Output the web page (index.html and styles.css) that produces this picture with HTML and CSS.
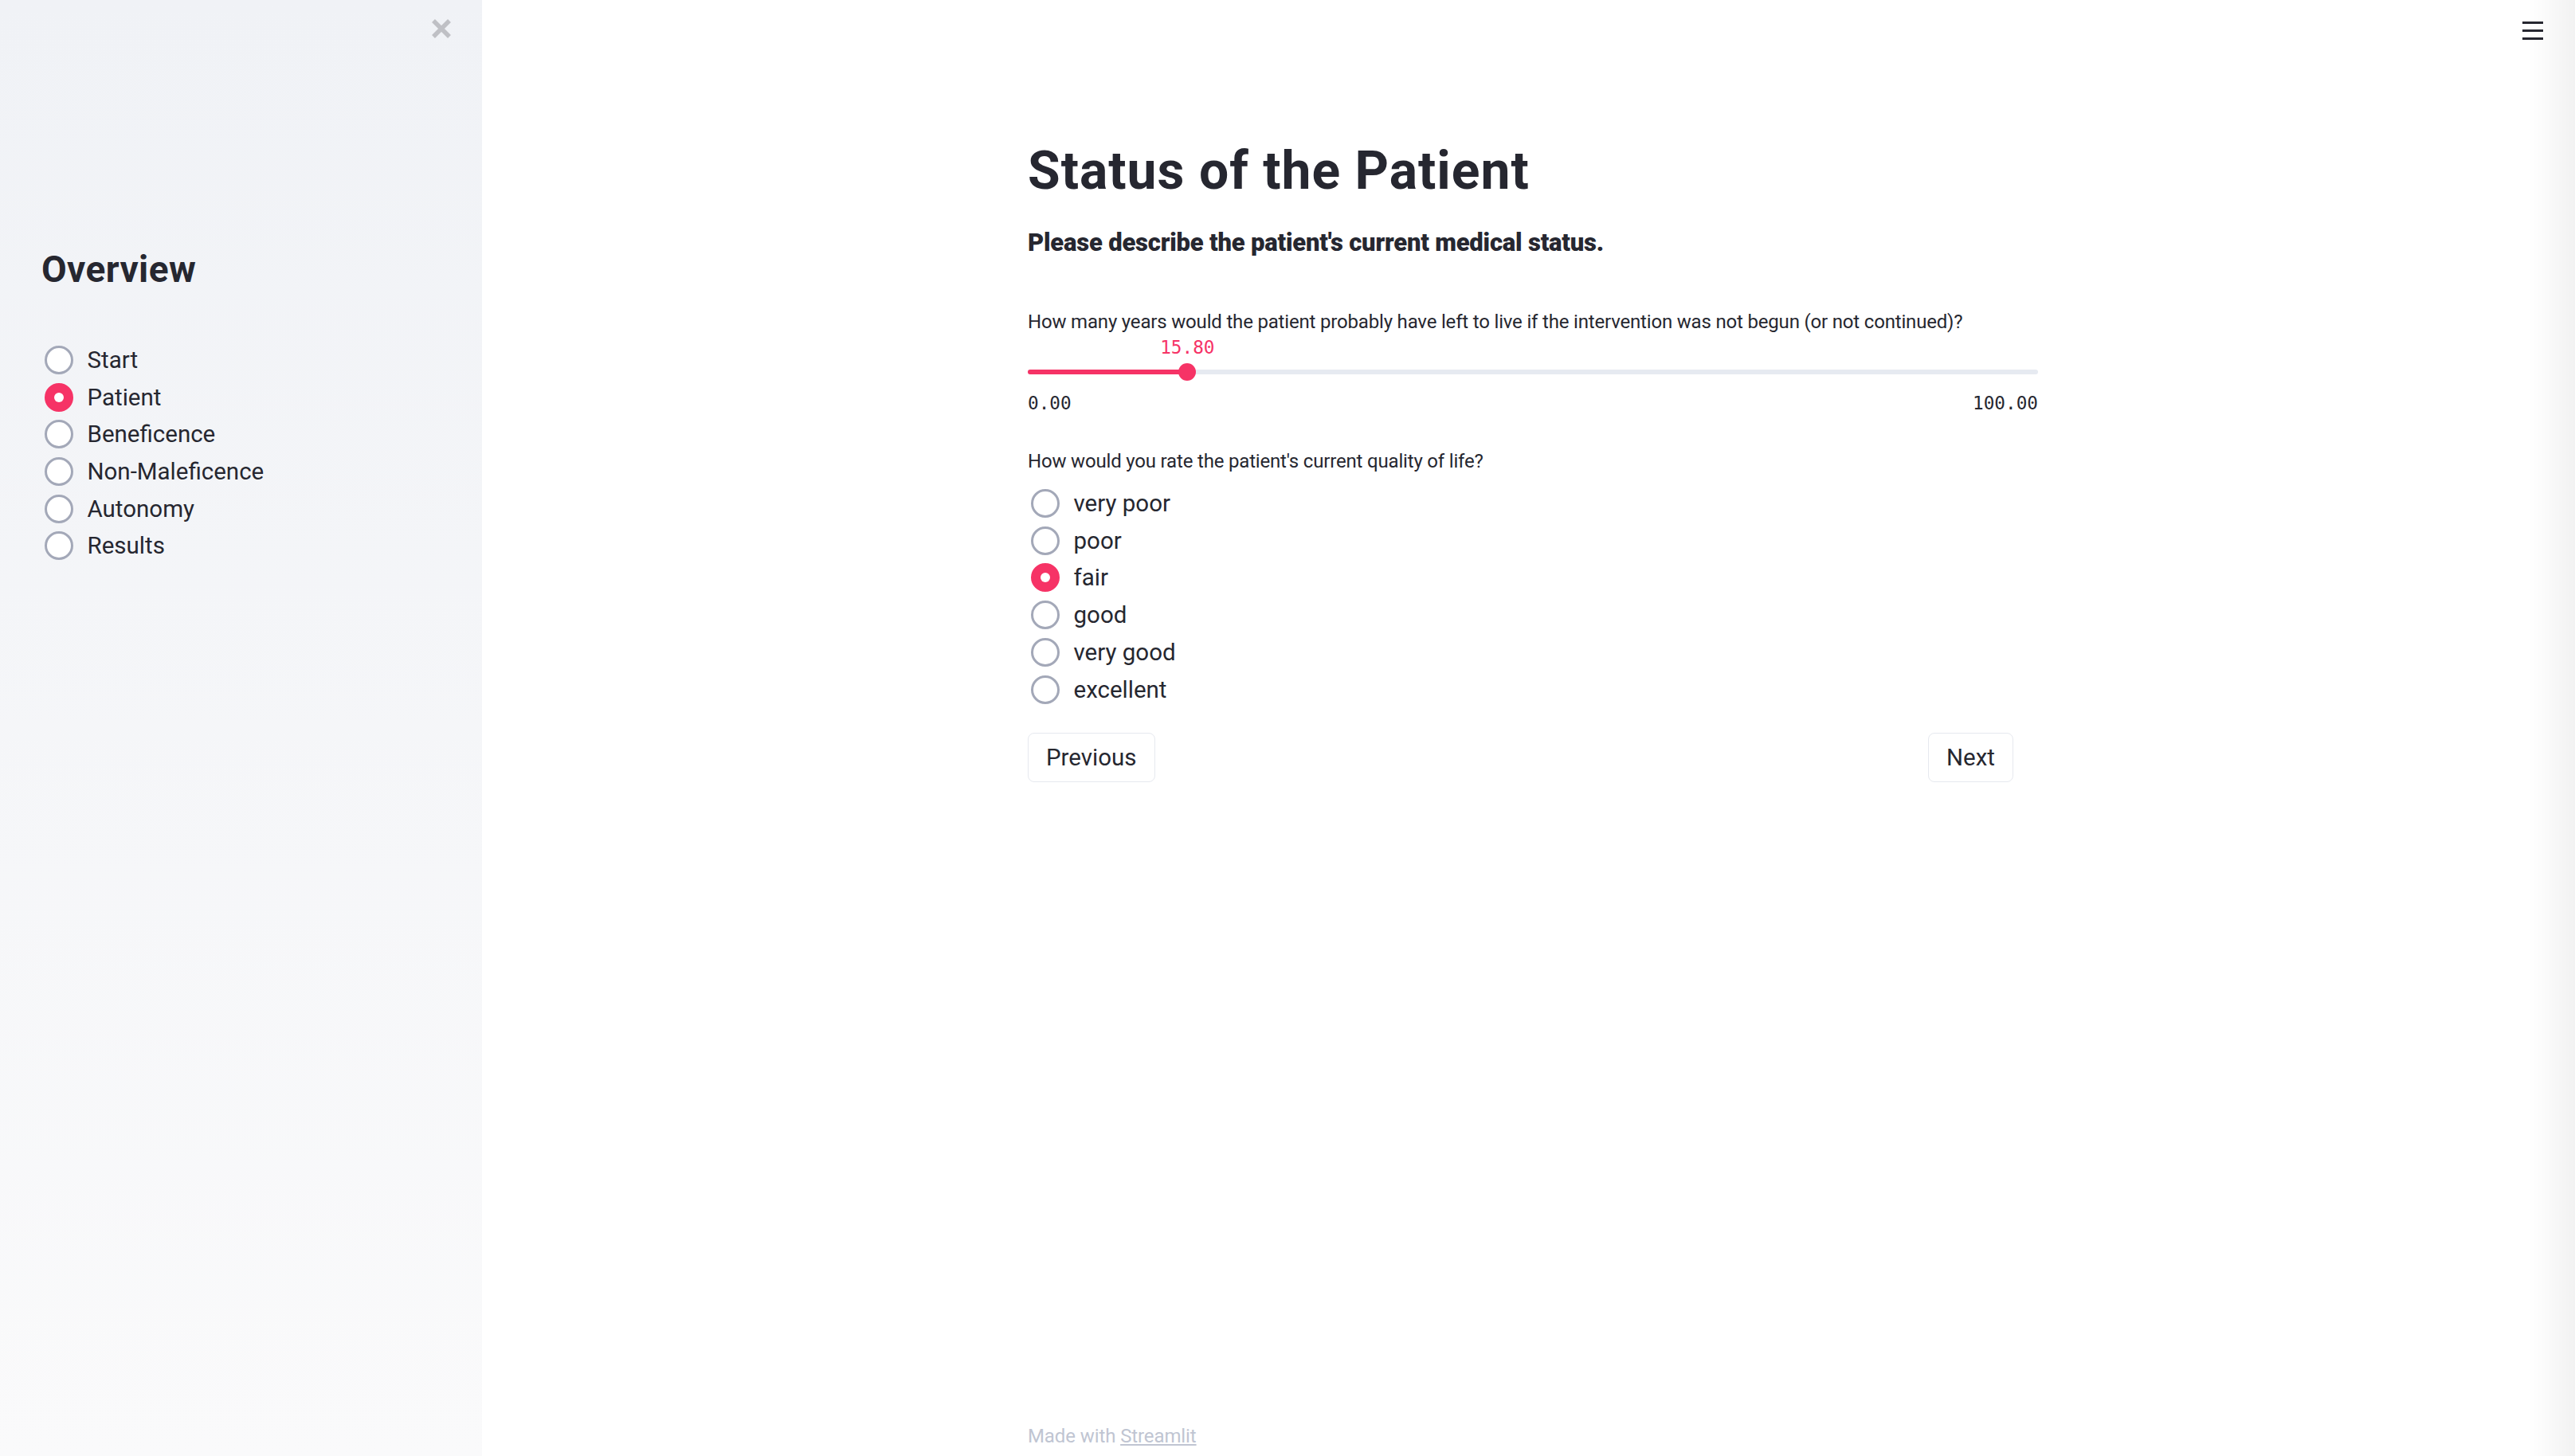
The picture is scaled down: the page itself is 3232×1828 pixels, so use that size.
FILE: index.html
```html
<!DOCTYPE html>
<html lang="en">
<head>
<meta charset="utf-8">
<title>Status of the Patient</title>
<link rel="stylesheet" href="styles.css">
</head>
<body>
<div class="app">
  <aside class="sidebar">
    <div class="sidebar-head">
      <button class="close-btn" aria-label="Close sidebar">
        <svg width="26" height="26" viewBox="0 0 26 26"><path d="M3 3L23 23M23 3L3 23" stroke="#bfc0c5" stroke-width="5.5" fill="none"/></svg>
      </button>
    </div>
    <h2 class="side-title">Overview</h2>
    <div class="radio-group side-radios">
      <label class="radio"><span class="dot"></span><span class="radio-text">Start</span></label>
      <label class="radio checked"><span class="dot"></span><span class="radio-text">Patient</span></label>
      <label class="radio"><span class="dot"></span><span class="radio-text">Beneficence</span></label>
      <label class="radio"><span class="dot"></span><span class="radio-text">Non-Maleficence</span></label>
      <label class="radio"><span class="dot"></span><span class="radio-text">Autonomy</span></label>
      <label class="radio"><span class="dot"></span><span class="radio-text">Results</span></label>
    </div>
  </aside>
  <main class="main">
    <div class="block">
      <h1 class="title">Status of the Patient</h1>
      <p class="subtitle"><strong>Please describe the patient's current medical status.</strong></p>
      <div class="widget-label">How many years would the patient probably have left to live if the intervention was not begun (or not continued)?</div>
      <div class="slider">
        <div class="track">
          <div class="fill" style="width:15.8%"></div>
          <div class="thumb" style="left:15.8%"><span class="thumb-value">15.80</span></div>
        </div>
        <div class="ticks"><span>0.00</span><span>100.00</span></div>
      </div>
      <div class="widget-label q2">How would you rate the patient's current quality of life?</div>
      <div class="radio-group main-radios">
        <label class="radio"><span class="dot"></span><span class="radio-text">very poor</span></label>
        <label class="radio"><span class="dot"></span><span class="radio-text">poor</span></label>
        <label class="radio checked"><span class="dot"></span><span class="radio-text">fair</span></label>
        <label class="radio"><span class="dot"></span><span class="radio-text">good</span></label>
        <label class="radio"><span class="dot"></span><span class="radio-text">very good</span></label>
        <label class="radio"><span class="dot"></span><span class="radio-text">excellent</span></label>
      </div>
      <div class="buttons">
        <button class="btn">Previous</button>
        <button class="btn">Next</button>
      </div>
    </div>
    <footer class="footer">Made with <a class="footer-link">Streamlit</a></footer>
  </main>
  <div class="edge-shade"></div>
  <button class="menu-btn" aria-label="Menu">
    <svg width="26" height="23" viewBox="0 0 26 23"><rect x="0" y="0" width="26" height="3" fill="#262730"/><rect x="0" y="10" width="26" height="3" fill="#262730"/><rect x="0" y="20" width="26" height="3" fill="#262730"/></svg>
  </button>
</div>
</body>
</html>
```

FILE: styles.css
```css
html, body {
  margin: 0;
  padding: 0;
  background: #ffffff;
}

body {
  font-family: Roboto, "Liberation Sans", sans-serif;
  color: #262730;
}

.app {
  display: flex;
  min-height: 1828px;
}

.sidebar {
  width: 605px;
  flex-shrink: 0;
  box-sizing: border-box;
  padding: 0 0 0 52px;
  background: linear-gradient(180deg, #f0f2f6 0%, #fafafb 100%);
}

.sidebar-head {
  display: flex;
  justify-content: flex-end;
  padding: 23px 38px 0 0;
}

.close-btn {
  width: 26px;
  height: 26px;
  padding: 0;
  border: 0;
  background: transparent;
  display: flex;
}

.side-title {
  margin: 262px 0 0 0;
  font-size: 46px;
  line-height: 54px;
  font-weight: 700;
  letter-spacing: 0.4px;
  color: #262730;
}

.side-radios {
  margin-top: 64px;
}

.radio {
  display: flex;
  align-items: center;
  height: 46.6px;
  font-size: 29.5px;
  color: #262730;
}

.main-radios .radio {
  height: 46.9px;
}

.dot {
  width: 36px;
  height: 36px;
  box-sizing: border-box;
  border: 3.3px solid #a3a8b8;
  border-radius: 50%;
  background: #ffffff;
  margin-left: 4px;
  margin-right: 17.5px;
  flex-shrink: 0;
  display: flex;
  align-items: center;
  justify-content: center;
}

.radio.checked .dot {
  background: #f63366;
  border-color: #f63366;
}

.radio.checked .dot::after {
  content: "";
  width: 12px;
  height: 12px;
  border-radius: 50%;
  background: #ffffff;
}

.main {
  flex: 1;
  display: flex;
  flex-direction: column;
  padding-left: 11px;
}

.block {
  width: 1268px;
  margin: 0 auto;
  padding-top: 179px;
}

.title {
  margin: 0;
  font-size: 66px;
  line-height: 72px;
  font-weight: 700;
  letter-spacing: 1px;
}

.subtitle {
  margin: 30.5px 0 0 0;
  font-size: 31px;
  line-height: 46.5px;
  font-weight: 700;
  letter-spacing: -0.2px;
}

.widget-label {
  margin-top: 57.5px;
  font-size: 24px;
  line-height: 36px;
  letter-spacing: -0.18px;
}

.widget-label.q2 {
  margin-top: 38px;
}

.track {
  position: relative;
  margin-top: 42px;
  height: 6px;
  border-radius: 3px;
  background: #e6eaf1;
}

.fill {
  position: absolute;
  left: 0;
  top: 0;
  bottom: 0;
  border-radius: 3px;
  background: #f63366;
}

.thumb {
  position: absolute;
  top: 50%;
  width: 22px;
  height: 22px;
  border-radius: 50%;
  background: #f63366;
  transform: translate(-50%, -50%);
}

.thumb-value {
  position: absolute;
  left: 50%;
  top: -31px;
  transform: translateX(-50%);
  font-family: "DejaVu Sans Mono", "Liberation Mono", monospace;
  font-size: 22.7px;
  line-height: 1;
  color: #f63366;
  white-space: nowrap;
}

.ticks {
  display: flex;
  justify-content: space-between;
  margin-top: 19px;
  font-family: "DejaVu Sans Mono", "Liberation Mono", monospace;
  font-size: 22.7px;
  line-height: 34px;
  color: #262730;
}

.main-radios {
  margin-top: 11.7px;
}

.buttons {
  display: flex;
  justify-content: space-between;
  margin-top: 30px;
  padding-right: 31px;
}

.btn {
  height: 62px;
  padding: 0 22px;
  border: 1px solid #e6e9ef;
  border-radius: 8px;
  background: #ffffff;
  font-family: Roboto, "Liberation Sans", sans-serif;
  font-size: 29.5px;
  color: #262730;
}

.footer {
  width: 1268px;
  margin: auto auto 0 auto;
  padding-bottom: 6px;
  font-size: 24px;
  line-height: 37.5px;
  letter-spacing: -0.1px;
  color: #c0c5d2;
}

.footer-link {
  color: #c0c5d2;
  text-decoration: underline;
}

.edge-shade {
  position: fixed;
  top: 0;
  right: 0;
  bottom: 0;
  width: 58px;
  background: linear-gradient(90deg, rgba(0, 0, 0, 0) 0%, rgba(0, 0, 0, 0.05) 100%);
  pointer-events: none;
}

.menu-btn {
  position: fixed;
  top: 27px;
  right: 40px;
  width: 26px;
  height: 23px;
  padding: 0;
  border: 0;
  background: transparent;
  display: flex;
}
```
